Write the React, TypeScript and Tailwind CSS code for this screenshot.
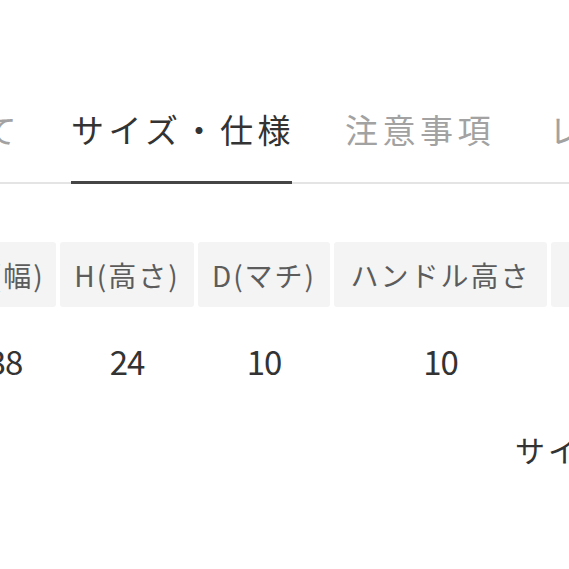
import React from 'react';

const tabs = [
  { label: 'について', active: false },
  { label: 'サイズ・仕様', active: true },
  { label: '注意事項', active: false },
  { label: 'レビュー', active: false },
];

const columns = [
  { label: 'W(幅)', value: '38', width: 'w-[102px] ml-[-46px]' },
  { label: 'H(高さ)', value: '24', width: 'w-[134px]' },
  { label: 'D(マチ)', value: '10', width: 'w-[132px]' },
  { label: 'ハンドル高さ', value: '10', width: 'w-[213px]' },
  { label: '重さ', value: '0.5', width: 'w-[150px]' },
];

export default function App() {
  return (
    <div className="w-[569px] h-[569px] overflow-hidden bg-white font-['Noto_Sans_CJK_JP',sans-serif]">
      {/* tabs */}
      <div className="mt-[109px] flex items-start gap-[50px] whitespace-nowrap border-b-2 border-[#e4e4e4]">
        {tabs.map((tab, i) => (
          <div
            key={tab.label}
            className={`shrink-0 pb-[32px] text-[33px] leading-[40px] tracking-[4.5px] ${
              i === 0 ? 'ml-[-128px]' : ''
            } ${i === 2 ? 'ml-[5px]' : ''} ${i === 3 ? 'ml-[4px]' : ''} ${
              tab.active
                ? 'mb-[-2px] mr-[-2px] w-[221px] border-b-[3px] border-[#454545] text-[#333]'
                : 'text-[#a2a2a2]'
            }`}
          >
            {tab.label}
          </div>
        ))}
      </div>

      {/* spec table */}
      <div className="mt-[58px] flex gap-[4px] whitespace-nowrap">
        {columns.map((col) => (
          <div key={col.label} className={`shrink-0 ${col.width}`}>
            <div className="flex h-[65px] items-center justify-center rounded-[3px] bg-[#f4f4f4] text-[28px] tracking-[2px] text-[#5c5c5c]">
              {col.label}
            </div>
            <div className="flex h-[110px] items-center justify-center text-[33px] tracking-[-1px] text-[#333]">
              {col.value}
            </div>
          </div>
        ))}
      </div>

      <div className="mt-[12px] ml-[515px] whitespace-nowrap text-[30px] leading-[40px] tracking-[3px] text-[#333]">
        サイズガイド
      </div>
    </div>
  );
}
